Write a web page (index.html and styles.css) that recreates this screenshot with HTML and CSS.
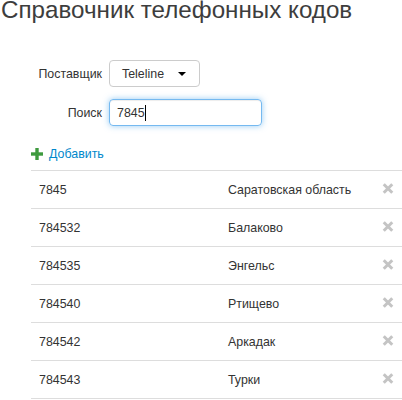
FILE: index.html
```html
<!DOCTYPE html>
<html lang="ru">
<head>
    <meta charset="UTF-8">
    <meta name="viewport" content="width=device-width, initial-scale=1.0">
    <title>Справочник телефонных кодов</title>
    <link rel="stylesheet" href="styles.css">
</head>
<body>
    <h1 class="page-title">Справочник телефонных кодов</h1>

    <div class="filter-form">
        <label class="filter-label">Поставщик</label>
        <div class="filter-control">
            <button class="provider-select" type="button">Teleline <span class="caret"></span></button>
        </div>

        <label class="filter-label">Поиск</label>
        <div class="filter-control">
            <div class="search-field"><span>7845</span><span class="text-cursor"></span></div>
        </div>
    </div>

    <a href="#" class="add-link">
        <svg class="icon-plus" width="12" height="12" viewBox="0 0 12 12">
            <rect x="4.3" y="0" width="3.4" height="12" fill="#3e9a3e"/>
            <rect x="0" y="4.3" width="12" height="3.4" fill="#3e9a3e"/>
        </svg>
        Добавить
    </a>

    <table class="codes-table">
        <tbody>
            <tr><td class="col-code">7845</td><td class="col-name">Саратовская область</td><td class="col-remove"><span class="remove-icon"></span></td></tr>
            <tr><td class="col-code">784532</td><td class="col-name">Балаково</td><td class="col-remove"><span class="remove-icon"></span></td></tr>
            <tr><td class="col-code">784535</td><td class="col-name">Энгельс</td><td class="col-remove"><span class="remove-icon"></span></td></tr>
            <tr><td class="col-code">784540</td><td class="col-name">Ртищево</td><td class="col-remove"><span class="remove-icon"></span></td></tr>
            <tr><td class="col-code">784542</td><td class="col-name">Аркадак</td><td class="col-remove"><span class="remove-icon"></span></td></tr>
            <tr><td class="col-code">784543</td><td class="col-name">Турки</td><td class="col-remove"><span class="remove-icon"></span></td></tr>
        </tbody>
    </table>
</body>
</html>
```

FILE: styles.css
```css
* {
    box-sizing: border-box;
}

body {
    margin: 0;
    font-family: 'Liberation Sans', Arial, sans-serif;
    font-size: 12.4px;
    line-height: 18px;
    color: #333;
    background: #fff;
}

.page-title {
    margin: 0 0 40px 1px;
    font-size: 24.2px;
    line-height: 20px;
    font-weight: normal;
    color: #3d3d3d;
}

/* Filter form: right-aligned labels, controls in a second column */
.filter-form {
    display: grid;
    grid-template-columns: 102px auto;
    column-gap: 7px;
    row-gap: 12px;
    align-items: center;
    justify-items: start;
}

.filter-label {
    justify-self: end;
    color: #333;
}

.provider-select {
    display: flex;
    align-items: center;
    justify-content: space-between;
    width: 91px;
    height: 27px;
    padding: 0 13px 0 12px;
    font-family: inherit;
    font-size: 12.4px;
    color: #333;
    background: #fff;
    border: 1px solid #ccc;
    border-radius: 4px;
}

.caret {
    width: 0;
    height: 0;
    border-top: 4px solid #000;
    border-left: 4px solid transparent;
    border-right: 4px solid transparent;
}

.search-field {
    display: flex;
    align-items: center;
    width: 153px;
    height: 27px;
    padding: 0 7px;
    border: 1px solid rgba(82, 168, 236, 0.8);
    border-radius: 4px;
    box-shadow: inset 0 1px 1px rgba(0, 0, 0, 0.075), 0 0 6px rgba(82, 168, 236, 0.6);
}

.text-cursor {
    display: inline-block;
    width: 1px;
    height: 16px;
    background: #000;
}

.add-link {
    display: flex;
    align-items: center;
    gap: 6px;
    width: max-content;
    margin: 19px 0 7px 31px;
    color: #0088cc;
    text-decoration: none;
}

/* Codes table */
.codes-table {
    width: 371px;
    margin-left: 31px;
    border-collapse: collapse;
}

.codes-table td {
    height: 38px;
    padding: 0 8px;
    border-top: 1px solid #ddd;
    border-bottom: 1px solid #ddd;
    vertical-align: middle;
}

.col-code {
    width: 189px;
}

.col-remove {
    width: 28px;
}

.remove-icon {
    position: relative;
    display: block;
    width: 10px;
    height: 10px;
    margin-top: -3px;
    margin-left: 1px;
}

.remove-icon::before,
.remove-icon::after {
    content: "";
    position: absolute;
    left: -1px;
    top: 3.5px;
    width: 12px;
    height: 3px;
    background: #c4c4c4;
    transform: rotate(45deg);
}

.remove-icon::after {
    transform: rotate(-45deg);
}
```
